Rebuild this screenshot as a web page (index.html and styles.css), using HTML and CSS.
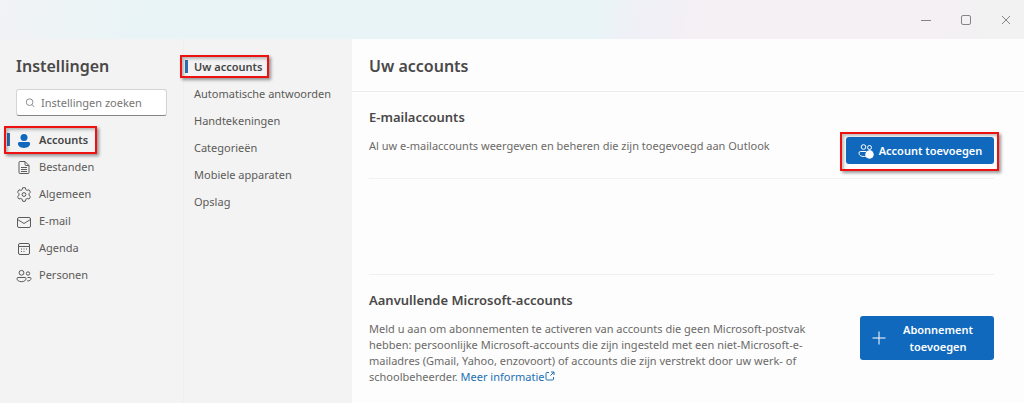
FILE: index.html
```html
<!DOCTYPE html>
<html lang="nl">
<head>
<meta charset="utf-8">
<meta name="viewport" content="width=device-width, initial-scale=1">
<title>Instellingen</title>
<link rel="stylesheet" href="styles.css">
</head>
<body>
<div class="window">
  <header class="titlebar">
    <button type="button" class="caption" aria-label="Minimaliseren"><svg viewBox="0 0 12 12"><path d="M1 6.500h10"/></svg></button>
    <button type="button" class="caption" aria-label="Maximaliseren"><svg viewBox="0 0 12 12"><rect x="1.500" y="1.500" width="9" height="9" rx="1.500"/></svg></button>
    <button type="button" class="caption" aria-label="Sluiten"><svg viewBox="0 0 12 12"><path d="M2 2l8 8M10 2l-8 8"/></svg></button>
  </header>
  <div class="body">
    <aside class="sidebar">
      <h1 class="title">Instellingen</h1>
      <label class="search">
        <svg viewBox="0 0 12 12"><circle cx="5.500" cy="5" r="4"/><path d="M8.500 8l2.500 2.800"/></svg>
        <input type="search" placeholder="Instellingen zoeken" aria-label="Instellingen zoeken">
      </label>
      <nav class="nav">
        <a class="item current marked" href="#">
          <svg class="solid" viewBox="0 0 16 16"><circle cx="8" cy="5.500" r="3.500"/><path d="M3.500 10h9a1.500 1.500 0 0 1 1.600 1.500c0 2.800-2.600 4.400-6.100 4.400s-6.100-1.600-6.100-4.400A1.500 1.500 0 0 1 3.500 10z"/></svg>
          Accounts</a>
        <a class="item" href="#">
          <svg viewBox="0 0 16 16"><path d="M4 2.500h5l4 4v7a1 1 0 0 1-1 1H4a1 1 0 0 1-1-1v-10a1 1 0 0 1 1-1zM9 2.500v3a1 1 0 0 0 1 1h3M5 8.500h6M5 10.500h6M5 12.500h6"/></svg>
          Bestanden</a>
        <a class="item" href="#">
          <svg viewBox="0 0 16 16"><path d="M6.600 1.800a6.800 6.800 0 0 1 2.800 0l.4 1.800 1.400.8 1.800-.6a6.800 6.800 0 0 1 1.400 2.400L13 7.700v1.600l1.400 1.300a6.800 6.800 0 0 1-1.400 2.400l-1.800-.5-1.400.8-.4 1.900a6.800 6.800 0 0 1-2.800 0l-.4-1.900-1.400-.8-1.800.5a6.800 6.800 0 0 1-1.400-2.400L3 9.300V7.700L1.600 6.200A6.800 6.800 0 0 1 3 3.800l1.800.6 1.400-.8z"/><circle cx="8" cy="8.500" r="1.900"/></svg>
          Algemeen</a>
        <a class="item" href="#">
          <svg viewBox="0 0 16 16"><rect x="1.500" y="4.500" width="13" height="10" rx="1.500"/><path d="M1.500 6.500L8 10.500l6.500-4"/></svg>
          E-mail</a>
        <a class="item" href="#">
          <svg viewBox="0 0 16 16"><rect x="2.500" y="3.500" width="11" height="11" rx="1.500"/><path d="M2.500 6.500h11"/><path d="M7.500 9h1M10 9h1M5 11.500h1M7.500 11.500h1M5 9h1"/></svg>
          Agenda</a>
        <a class="item" href="#">
          <svg viewBox="0 0 16 16"><circle cx="5.500" cy="5.800" r="2.400"/><circle cx="12" cy="6.500" r="1.700"/><path d="M2 10.500h7a1 1 0 0 1 1 1c0 2-1.900 3.200-4.500 3.200S1 13.500 1 11.500a1 1 0 0 1 1-1zM11.500 10.500H14a1 1 0 0 1 1 1c0 1.500-1.300 2.600-3.800 2.400"/></svg>
          Personen</a>
      </nav>
    </aside>
    <nav class="subnav">
      <a class="subitem current marked" href="#">Uw accounts</a>
      <a class="subitem" href="#">Automatische antwoorden</a>
      <a class="subitem" href="#">Handtekeningen</a>
      <a class="subitem" href="#">Categorieën</a>
      <a class="subitem" href="#">Mobiele apparaten</a>
      <a class="subitem" href="#">Opslag</a>
    </nav>
    <main class="main">
      <h2 class="heading">Uw accounts</h2>
      <section class="section accounts">
        <div class="text">
          <h3 class="subheading">E-mailaccounts</h3>
          <p class="copy">Al uw e-mailaccounts weergeven en beheren die zijn toegevoegd aan Outlook</p>
        </div>
        <div class="action marked">
          <button type="button" class="primary">
            <svg viewBox="0 0 16 16"><circle cx="5.500" cy="4" r="2.300"/><circle cx="11.500" cy="4.500" r="2"/><path d="M8 13.300C3.500 14 1 12.500 1 10a1.500 1.500 0 0 1 1.500-1.500H8M11 8h2.500"/><circle class="dot" cx="11.500" cy="11.500" r="3.800"/></svg>
            Account toevoegen</button>
        </div>
      </section>
      <div class="account-list"></div>
      <section class="section extra">
        <div class="text">
          <h3 class="subheading">Aanvullende Microsoft-accounts</h3>
          <p class="copy">Meld u aan om abonnementen te activeren van accounts die geen Microsoft-postvak hebben: persoonlijke Microsoft-accounts die zijn ingesteld met een niet-Microsoft-e-mailadres (Gmail, Yahoo, enzovoort) of accounts die zijn verstrekt door uw werk- of schoolbeheerder. <a class="link" href="#">Meer informatie<svg viewBox="0 0 10 10"><path d="M4 1.500H2a1 1 0 0 0-1 1V8a1 1 0 0 0 1 1h5.500a1 1 0 0 0 1-1V6M6 1h3v3M9 1L5.500 4.500"/></svg></a></p>
        </div>
        <button type="button" class="primary tall">
          <svg viewBox="0 0 16 16"><path d="M8 1.500v13M1.500 8h13"/></svg>
          <span>Abonnement<br>toevoegen</span></button>
      </section>
    </main>
  </div>
</div>
</body>
</html>
```
FILE: styles.css
```css
*, *::before, *::after { box-sizing: border-box; }
body {
  margin: 0;
  font: 11px/16px "Noto Sans", "Open Sans", sans-serif;
  color: #5c5a58;
  background: #fdfdfd;
}
h1, h2, h3, p { margin: 0; }
a { color: inherit; text-decoration: none; }
button, input { font: inherit; }
svg { fill: none; stroke: currentColor; flex: none; }

.window { min-height: 100vh; display: flex; flex-direction: column; }
.titlebar {
  display: flex;
  justify-content: flex-end;
  align-items: center;
  height: 39px;
  background: linear-gradient(100deg, #f1f3f5 0%, #edf4f6 8%, #e9f4f7 14%, #e9f4f7 58%, #eff0f6 62%, #f1f0f6 65%, #f5f0f4 68%, #f4f0f4 92%, #f2f2f2 96%);
}
.caption {
  width: 40px;
  height: 39px;
  padding: 0;
  border: 0;
  background: none;
  color: #858585;
}
.caption:last-child { margin-right: -2px; }
.caption svg { width: 12px; height: 12px; display: block; margin: auto; }

.body { flex: 1; display: flex; }
.sidebar {
  width: 184px;
  padding: 15px 16px;
  background: #f3f3f3;
  border-right: 1px solid #efefef;
}
.title { font-size: 16px; line-height: 24px; font-weight: 600; color: #4a4848; }
.search {
  display: flex;
  align-items: center;
  gap: 6px;
  height: 27px;
  margin: 11px 0 10px;
  padding: 0 8px;
  background: #fff;
  border: 1px solid #d4d4d4;
  border-bottom-color: #858585;
  border-radius: 3px;
}
.search svg { width: 10px; height: 10px; color: #777; }
.search input { flex: 1; min-width: 0; padding: 0; border: 0; outline: 0; background: none; }
.search input::placeholder { color: #767676; opacity: 1; }

.item, .subitem { position: relative; display: flex; align-items: center; height: 27px; }
.item { gap: 7px; }
.item svg { width: 16px; height: 16px; }
.item .solid { fill: #1069bd; stroke: none; }
.current { font-weight: 600; color: #444; }
.current::before {
  content: "";
  position: absolute;
  left: -9px;
  top: 7px;
  width: 3px;
  height: 13px;
  background: #2f6cb0;
}
.marked { position: relative; }
.marked::after {
  content: "";
  position: absolute;
  border: 2px solid #ee1111;
  box-shadow: 2px 2px 3px #00000066, inset 2px 2px 3px #00000040;
  pointer-events: none;
}
.item.marked::after { left: -12px; top: 0; width: 93px; height: 28px; }
.subitem.marked::after { left: -14px; top: 2px; width: 89px; height: 23px; }

.subnav { width: 168px; padding: 14px 10px; background: #f3f3f3; white-space: nowrap; }

.main { flex: 1; min-width: 0; background: #fdfdfd; }
.heading {
  padding: 15px 17px 13px;
  font-size: 16px;
  line-height: 24px;
  font-weight: 600;
  color: #4a4848;
  border-bottom: 1px solid #ececec;
}
.section { display: flex; justify-content: space-between; margin: 0 30px 0 17px; }
.accounts { align-items: flex-end; padding: 15px 0 14px; border-bottom: 1px solid #f2f2f2; }
.account-list { height: 96px; margin: 0 30px 0 17px; border-bottom: 1px solid #efefef; }
.extra { padding: 15px 0; align-items: center; }
.extra .text { flex: 0 1 452px; }
.accounts .text { padding-bottom: 10px; }
.subheading { font-size: 13px; line-height: 20px; font-weight: 600; color: #4a4848; }
.copy { margin-top: 11px; color: #6c6a68; }
.link { color: #2170b4; }
.link svg { width: 10px; height: 10px; margin-left: 1px; vertical-align: 0; }

.primary {
  display: flex;
  align-items: center;
  justify-content: center;
  gap: 5px;
  min-width: 148px;
  height: 27px;
  padding: 0 10px;
  border: 0;
  border-radius: 3px;
  background: #1069bd;
  color: #fff;
  font-weight: 600;
}
.primary svg { width: 16px; height: 16px; }
.primary .dot { fill: #fff; }
.action.marked::after { inset: -5px -5px -7px -6px; }
.tall { min-width: 134px; height: 44px; padding: 0 20px 0 10px; line-height: 17px; gap: 16px; }
```
